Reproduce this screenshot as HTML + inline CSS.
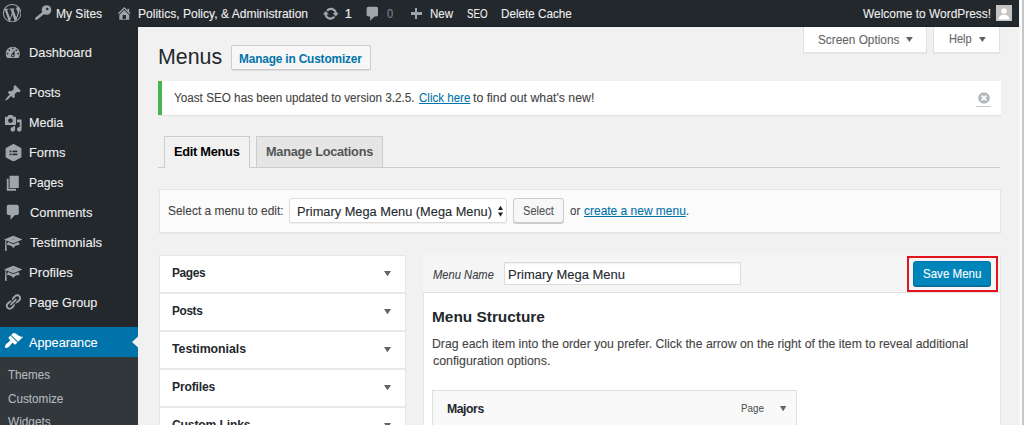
<!DOCTYPE html>
<html><head><meta charset="utf-8"><style>
html,body{margin:0;padding:0;width:1024px;height:425px;overflow:hidden;background:#f1f1f1}
.t{position:absolute;white-space:nowrap;transform-origin:0 0;font-family:"Liberation Sans",sans-serif}
.r{position:absolute}
svg{position:absolute}
</style></head><body>
<div class="r" style="left:0px;top:0px;width:1019px;height:27px;background:#23282d"></div>
<div class="r" style="left:138px;top:26px;width:881px;height:1px;background:#1d2125"></div>
<div class="t" style="left:56.09px;top:8.22px;font-size:12.50px;line-height:12.50px;color:#eee;font-weight:400;font-style:normal;transform:scaleX(0.9621);-webkit-text-stroke:0.1px #eee;">My Sites</div>
<div class="t" style="left:137.61px;top:7.65px;font-size:12.94px;line-height:12.94px;color:#eee;font-weight:400;font-style:normal;transform:scaleX(0.9324);-webkit-text-stroke:0.1px #eee;">Politics, Policy, &amp; Administration</div>
<div class="t" style="left:344.70px;top:8.07px;font-size:12.79px;line-height:12.79px;color:#eee;font-weight:400;font-style:normal;-webkit-text-stroke:0.2px #eee;">1</div>
<div class="t" style="left:387.24px;top:8.07px;font-size:12.79px;line-height:12.79px;color:#82878c;font-weight:400;font-style:normal;transform:scaleX(0.8592);-webkit-text-stroke:0.1px #82878c;">0</div>
<div class="t" style="left:429.52px;top:8.22px;font-size:12.50px;line-height:12.50px;color:#eee;font-weight:400;font-style:normal;transform:scaleX(0.9211);-webkit-text-stroke:0.1px #eee;">New</div>
<div class="t" style="left:467.04px;top:8.22px;font-size:12.50px;line-height:12.50px;color:#eee;font-weight:400;font-style:normal;transform:scaleX(0.7843);-webkit-text-stroke:0.1px #eee;">SEO</div>
<div class="t" style="left:501.11px;top:8.22px;font-size:12.50px;line-height:12.50px;color:#eee;font-weight:400;font-style:normal;transform:scaleX(0.9347);-webkit-text-stroke:0.1px #eee;">Delete Cache</div>
<div class="t" style="left:862.75px;top:8.22px;font-size:12.50px;line-height:12.50px;color:#eee;font-weight:400;font-style:normal;transform:scaleX(0.9535);-webkit-text-stroke:0.1px #eee;">Welcome to WordPress!</div>
<svg style="left:3.0px;top:4.0px;" width="18.4" height="18.4" viewBox="0 0 20 20"><path d="M20 10c0-5.51-4.49-10-10-10C4.48 0 0 4.49 0 10c0 5.52 4.48 10 10 10 5.51 0 10-4.48 10-10zM7.78 15.37L4.37 6.22c.55-.02 1.170-.08 1.17-.08.5-.06.44-1.13-.06-1.11 0 0-1.45.11-2.37.11-.18 0-.37 0-.58-.01C4.120 2.690 6.870 1.110 10 1.110c2.330 0 4.450.870 6.050 2.340-.68-.11-1.650.390-1.650 1.580 0 .740.450 1.360.900 2.100.350.610.550 1.360.550 2.460 0 1.490-1.400 5-1.400 5l-3.030-8.370c.540-.020.820-.170.820-.170.500-.050.440-1.250-.060-1.220 0 0-1.440.120-2.380.120-.870 0-2.330-.120-2.330-.120-.500-.030-.560 1.200-.060 1.220l.920.080 1.260 3.410zM17.410 10c.240-.640.740-1.870.430-4.250.700 1.290 1.050 2.710 1.050 4.250 0 3.290-1.730 6.240-4.400 7.780.970-2.590 1.940-5.200 2.920-7.780zM6.100 18.090C3.120 16.650 1.110 13.530 1.110 10c0-1.300.230-2.480.720-3.590C3.250 10.300 4.670 14.200 6.100 18.090zm4.030-6.630l2.580 6.980c-.860.290-1.760.450-2.710.450-.790 0-1.570-.110-2.290-.330.810-2.380 1.620-4.740 2.420-7.100z" fill="#a0a5aa"/></svg>
<svg style="left:34px;top:4px;" width="18" height="17" viewBox="0 0 18 17"><circle cx="12.5" cy="6" r="4.8" fill="#a0a5aa"/><circle cx="13.3" cy="5" r="1.2" fill="#23282d"/><path d="M10.5 8 L2.5 14.5" stroke="#a0a5aa" stroke-width="2.8" stroke-linecap="round"/></svg>
<svg style="left:115.5px;top:4.5px;" width="16.5" height="16.5" viewBox="0 0 20 20"><path d="M16 8.5l1.53 1.53-1.06 1.06L10 4.62l-6.47 6.47-1.06-1.06L10 2.5l4 4v-2h2v4zm-6-2.46l6 5.99V18H4v-5.97zM12 17v-5H8v5h4z" fill="#a0a5aa"/></svg>
<svg style="left:321.5px;top:4.5px;" width="17.5" height="17.5" viewBox="0 0 20 20"><path d="M10.2 3.28c3.53 0 6.43 2.61 6.92 6h2.08l-3.5 4-3.5-4h2.32c-.45-1.97-2.21-3.45-4.320-3.450-1.450 0-2.730.710-3.540 1.780L4.950 5.660C6.230 4.200 8.110 3.280 10.200 3.280zm-.4 13.44c-3.52 0-6.43-2.61-6.92-6H.8l3.5-4c1.17 1.33 2.33 2.67 3.5 4H5.48c.45 1.97 2.21 3.45 4.32 3.45 1.45 0 2.73-.71 3.54-1.78l1.71 1.95c-1.28 1.46-3.15 2.38-5.25 2.38z" fill="#a0a5aa"/></svg>
<svg style="left:363.5px;top:5.2px;" width="17.5" height="17.5" viewBox="0 0 20 20"><path d="M5 2h9c1.1 0 2 .9 2 2v7c0 1.1-.9 2-2 2h-2l-5 5v-5H5c-1.1 0-2-.9-2-2V4c0-1.1.9-2 2-2z" fill="#a0a5aa"/></svg>
<div class="r" style="left:410.5px;top:12.4px;width:11.5px;height:2.6px;background:#a0a5aa"></div>
<div class="r" style="left:414.9px;top:8px;width:2.6px;height:11.4px;background:#a0a5aa"></div>
<svg style="left:996px;top:5px;" width="16" height="16" viewBox="0 0 16 16"><rect width="16" height="16" fill="#c4c4c4"/><circle cx="8" cy="6" r="2.8" fill="#fff"/><path d="M2.5 14.5 C3 10.8 5.2 9.8 8 9.8 C10.8 9.8 13 10.8 13.5 14.5Z" fill="#fff"/></svg>
<div class="r" style="left:0px;top:27px;width:138px;height:398px;background:#23282d"></div>
<div class="t" style="left:28.96px;top:46.95px;font-size:12.94px;line-height:12.94px;color:#eee;font-weight:400;font-style:normal;transform:scaleX(0.9931);-webkit-text-stroke:0.1px #eee;">Dashboard</div>
<div class="t" style="left:28.97px;top:86.95px;font-size:12.94px;line-height:12.94px;color:#eee;font-weight:400;font-style:normal;transform:scaleX(0.9788);-webkit-text-stroke:0.1px #eee;">Posts</div>
<div class="t" style="left:28.97px;top:116.95px;font-size:12.94px;line-height:12.94px;color:#eee;font-weight:400;font-style:normal;transform:scaleX(0.9741);-webkit-text-stroke:0.1px #eee;">Media</div>
<div class="t" style="left:28.95px;top:146.95px;font-size:12.94px;line-height:12.94px;color:#eee;font-weight:400;font-style:normal;-webkit-text-stroke:0.1px #eee;">Forms</div>
<div class="t" style="left:29.01px;top:176.95px;font-size:12.94px;line-height:12.94px;color:#eee;font-weight:400;font-style:normal;transform:scaleX(0.9326);-webkit-text-stroke:0.1px #eee;">Pages</div>
<div class="t" style="left:29.95px;top:206.95px;font-size:12.94px;line-height:12.94px;color:#eee;font-weight:400;font-style:normal;transform:scaleX(0.9966);-webkit-text-stroke:0.1px #eee;">Comments</div>
<div class="t" style="left:29.95px;top:236.95px;font-size:12.94px;line-height:12.94px;color:#eee;font-weight:400;font-style:normal;transform:scaleX(1.0137);-webkit-text-stroke:0.1px #eee;">Testimonials</div>
<div class="t" style="left:28.93px;top:266.95px;font-size:12.94px;line-height:12.94px;color:#eee;font-weight:400;font-style:normal;transform:scaleX(1.0161);-webkit-text-stroke:0.1px #eee;">Profiles</div>
<div class="t" style="left:28.97px;top:296.95px;font-size:12.94px;line-height:12.94px;color:#eee;font-weight:400;font-style:normal;transform:scaleX(0.9797);-webkit-text-stroke:0.1px #eee;">Page Group</div>
<svg style="left:4.0px;top:44.0px;" width="17.6" height="17.6" viewBox="0 0 20 20"><path d="M3.76 16h12.48c1.1-1.37 1.76-3.11 1.76-5 0-4.42-3.58-8-8-8s-8 3.58-8 8c0 1.89.66 3.63 1.76 5zM10 4c.55 0 1 .45 1 1s-.45 1-1 1-1-.45-1-1 .45-1 1-1zM6 6c.55 0 1 .45 1 1s-.45 1-1 1-1-.45-1-1 .45-1 1-1zm8 0c.55 0 1 .45 1 1s-.45 1-1 1-1-.45-1-1 .45-1 1-1zm-5.37 5.55L12 7v6c0 1.1-.9 2-2 2s-2-.9-2-2c0-.57.24-1.08.63-1.45zM4 10c.55 0 1 .45 1 1s-.45 1-1 1-1-.45-1-1 .45-1 1-1zm12 0c.55 0 1 .45 1 1s-.45 1-1 1-1-.45-1-1 .45-1 1-1zm-5 3c0-.55-.45-1-1-1s-1 .45-1 1 .45 1 1 1 1-.45 1-1z" fill="#a0a5aa"/></svg>
<svg style="left:3.8px;top:83.5px;" width="18" height="18" viewBox="0 0 20 20"><path d="M10.44 3.02l1.82-1.82 6.36 6.35-1.83 1.82c-1.05-.68-2.48-.57-3.41.36l-.75.75c-.92.93-1.04 2.35-.35 3.41l-1.83 1.82-2.41-2.41-2.8 2.79c-.42.42-3.38 2.71-3.8 2.29s1.86-3.39 2.28-3.81l2.79-2.790L4.100 9.360l1.830-1.820c1.050.690 2.480.570 3.400-.360l.750-.750c.930-.920 1.050-2.350.360-3.410z" fill="#a0a5aa"/></svg>
<svg style="left:4px;top:113.5px;" width="18.5" height="18.5" viewBox="0 0 20 20"><path d="M13 11V4c0-.55-.45-1-1-1h-1.67L9 1H5L3.67 3H2c-.55 0-1 .45-1 1v7c0 .55.45 1 1 1h10c.55 0 1-.45 1-1zM7 4.5c1.38 0 2.5 1.12 2.5 2.5S8.38 9.5 7 9.5 4.5 8.38 4.5 7 5.62 4.5 7 4.5zM14 6h5v10.5c0 1.38-1.12 2.5-2.5 2.5S14 17.88 14 16.5s1.12-2.5 2.5-2.5c.17 0 .34.02.5.05V9h-3V6zm-4 8.05V13h2v3.5c0 1.38-1.12 2.5-2.5 2.5S7 17.880 7 16.500 8.120 14 9.500 14c.170 0 .340.020.500.050z" fill="#a0a5aa"/></svg>
<svg style="left:4.5px;top:143.5px;" width="17" height="17.5" viewBox="0 0 17 17.5"><path d="M8.5 0.6 L15.8 4.6 L15.8 12.9 L8.5 16.9 L1.2 12.9 L1.2 4.6Z" fill="#a0a5aa" stroke="#a0a5aa" stroke-width="1.2" stroke-linejoin="round"/><rect x="4.6" y="6.6" width="1.8" height="1.6" fill="#23282d"/><rect x="7.4" y="6.6" width="5" height="1.6" fill="#23282d"/><rect x="4.6" y="9.6" width="1.8" height="1.6" fill="#23282d"/><rect x="7.4" y="9.6" width="5" height="1.6" fill="#23282d"/></svg>
<svg style="left:3.8px;top:173.5px;" width="18.5" height="18.5" viewBox="0 0 20 20"><path d="M6 15V2h10v13H6zm-1 1h8v2H3V5h2v11z" fill="#a0a5aa"/></svg>
<svg style="left:3.8px;top:202.8px;" width="18.5" height="18.5" viewBox="0 0 20 20"><path d="M5 2h9c1.1 0 2 .9 2 2v7c0 1.1-.9 2-2 2h-2l-5 5v-5H5c-1.1 0-2-.9-2-2V4c0-1.1.9-2 2-2z" fill="#a0a5aa"/></svg>
<svg style="left:3.8px;top:233.5px;" width="18.5" height="18.5" viewBox="0 0 20 20"><path d="M10 10L2.54 7.02 3 18H1l.48-11.41L0 6l10-4 10 4zm0-5c-.55 0-1 .22-1 .5s.45.5 1 .5 1-.22 1-.5-.45-.5-1-.5zm0 6l5.57-2.23c.71.94 1.2 2.07 1.36 3.3-.3-.04-.61-.07-.93-.07-2.55 0-4.78 1.37-6 3.41C8.78 13.37 6.55 12 4 12c-.32 0-.63.03-.93.07.16-1.23.65-2.36 1.36-3.3z" fill="#a0a5aa"/></svg>
<svg style="left:3.8px;top:263.5px;" width="18.5" height="18.5" viewBox="0 0 20 20"><path d="M10 10L2.54 7.02 3 18H1l.48-11.41L0 6l10-4 10 4zm0-5c-.55 0-1 .22-1 .5s.45.5 1 .5 1-.22 1-.5-.45-.5-1-.5zm0 6l5.57-2.23c.71.94 1.2 2.07 1.36 3.3-.3-.04-.61-.07-.93-.07-2.55 0-4.78 1.37-6 3.41C8.78 13.37 6.55 12 4 12c-.32 0-.63.03-.93.07.16-1.23.65-2.36 1.36-3.3z" fill="#a0a5aa"/></svg>
<svg style="left:4.2px;top:293.2px;" width="18" height="18" viewBox="0 0 20 20"><path d="M17.74 2.76c1.68 1.69 1.68 4.41 0 6.1l-1.53 1.52c-1.12 1.12-2.7 1.47-4.14 1.09l2.62-2.61.76-.77.76-.76c.84-.84.84-2.2 0-3.04-.84-.85-2.2-.85-3.04 0l-.77.76-3.38 3.38c-.37-1.44-.02-3.02 1.1-4.14l1.52-1.53c1.69-1.68 4.42-1.68 6.1 0zM8.59 13.43l5.34-5.34c.42-.42.42-1.1 0-1.52-.44-.43-1.13-.39-1.53 0l-5.33 5.34c-.42.42-.42 1.1 0 1.52.44.43 1.13.39 1.52 0zm-.76 2.29l4.14-4.15c.38 1.44.03 3.02-1.09 4.14l-1.52 1.53c-1.69 1.68-4.41 1.68-6.1 0-1.68-1.68-1.68-4.42 0-6.1l1.53-1.52c1.12-1.12 2.7-1.470 4.140-1.100l-4.140 4.150c-.850.840-.850 2.200 0 3.050.840.840 2.200.840 3.040 0z" fill="#a0a5aa"/></svg>
<div class="r" style="left:0px;top:327px;width:138px;height:30px;background:#0073aa"></div>
<svg style="left:3.5px;top:330.5px;" width="19.5" height="19.5" viewBox="0 0 20 20"><path d="M14.48 11.06L7.41 3.99l1.5-1.5c.5-.56 2.3-.47 3.51.32 1.21.8 1.43 1.28 2.91 2.1 1.18.64 2.45 1.26 4.45.85zm-.71.71L6.7 4.7 4.93 6.47c-.39.39-.39 1.02 0 1.41l1.06 1.06c.39.39.39 1.03 0 1.42-.6.6-1.43 1.11-2.21 1.69-.35.26-.7.53-1.01.84C1.43 14.230.4 16.080 1.4 17.070c.99 1 2.84-.03 4.18-1.36.31-.31.58-.66.85-1.02.57-.78 1.08-1.61 1.69-2.21.39-.39 1.02-.39 1.41 0l1.06 1.06c.39.39 1.02.39 1.41 0z" fill="#fff"/></svg>
<svg style="left:131.5px;top:336px;" width="6.5" height="12" viewBox="0 0 6.5 12"><path d="M6.5 0 L0 6 L6.5 12Z" fill="#f1f1f1"/></svg>
<div class="t" style="left:29.45px;top:336.33px;font-size:13.08px;line-height:13.08px;color:#fff;font-weight:400;font-style:normal;transform:scaleX(0.9722);-webkit-text-stroke:0.1px #fff;">Appearance</div>
<div class="r" style="left:0px;top:357px;width:138px;height:68px;background:#32373c"></div>
<div class="t" style="left:8.15px;top:368.72px;font-size:12.50px;line-height:12.50px;color:#b4b9be;font-weight:400;font-style:normal;transform:scaleX(0.9310);-webkit-text-stroke:0.1px #b4b9be;">Themes</div>
<div class="t" style="left:8.15px;top:392.62px;font-size:12.50px;line-height:12.50px;color:#b4b9be;font-weight:400;font-style:normal;transform:scaleX(0.9376);-webkit-text-stroke:0.1px #b4b9be;">Customize</div>
<div class="t" style="left:8.15px;top:416.32px;font-size:12.50px;line-height:12.50px;color:#b4b9be;font-weight:400;font-style:normal;transform:scaleX(0.9444);-webkit-text-stroke:0.1px #b4b9be;">Widgets</div>
<div class="r" style="left:138px;top:27px;width:881px;height:398px;background:#f1f1f1"></div>
<div class="r" style="left:1019px;top:0px;width:1px;height:425px;background:#f4f4f4"></div>
<div class="r" style="left:1020px;top:0px;width:2px;height:425px;background:#fbfbfb"></div>
<div class="r" style="left:1022px;top:0px;width:2px;height:425px;background:#c6c6c6"></div>
<div class="r" style="left:803px;top:27px;width:124px;height:26px;background:#fff;border:1px solid #e1e1e1;border-top:none;box-sizing:border-box;box-shadow:0 1px 1px rgba(0,0,0,.04)"></div>
<div class="t" style="left:817.95px;top:34.34px;font-size:12.35px;line-height:12.35px;color:#666;font-weight:400;font-style:normal;transform:scaleX(0.9564);-webkit-text-stroke:0.1px #666;">Screen Options</div>
<div class="r" style="left:933px;top:27px;width:67px;height:26px;background:#fff;border:1px solid #e1e1e1;border-top:none;box-sizing:border-box;box-shadow:0 1px 1px rgba(0,0,0,.04)"></div>
<div class="t" style="left:948.85px;top:34.31px;font-size:11.92px;line-height:11.92px;color:#666;font-weight:400;font-style:normal;transform:scaleX(0.9253);-webkit-text-stroke:0.1px #666;">Help</div>
<svg style="left:906.2px;top:37.0px;" width="6.8" height="5.0" viewBox="0 0 6.8 5.0"><path d="M0 0 L6.8 0 L3.4 5.0Z" fill="#5f6468"/></svg>
<svg style="left:979.1px;top:37.0px;" width="6.8" height="5.0" viewBox="0 0 6.8 5.0"><path d="M0 0 L6.8 0 L3.4 5.0Z" fill="#5f6468"/></svg>
<div class="t" style="left:157.91px;top:47.19px;font-size:21.51px;line-height:21.51px;color:#23282d;font-weight:400;font-style:normal;transform:scaleX(0.9939);">Menus</div>
<div class="r" style="left:231px;top:45px;width:139.5px;height:24.5px;background:#f7f7f7;border:1px solid #ccc;border-radius:2px;box-sizing:border-box;box-shadow:0 1px 0 #ddd"></div>
<div class="t" style="left:239.40px;top:52.51px;font-size:12.15px;line-height:12.15px;color:#0073aa;font-weight:700;font-style:normal;transform:scaleX(0.9764);letter-spacing:-0.160px;">Manage in Customizer</div>
<div class="r" style="left:158px;top:80.5px;width:843px;height:34px;background:#fff;border-left:4px solid #46b450;box-sizing:border-box;box-shadow:0 1px 1px rgba(0,0,0,.06)"></div>
<div class="t" style="left:174.24px;top:91.43px;font-size:13.08px;line-height:13.08px;color:#444;font-weight:400;font-style:normal;transform:scaleX(0.8955);-webkit-text-stroke:0.1px #444;">Yoast SEO has been updated to version 3.2.5.</div>
<div class="t" style="left:418.54px;top:91.43px;font-size:13.08px;line-height:13.08px;color:#0073aa;font-weight:400;font-style:normal;transform:scaleX(0.8832);-webkit-text-stroke:0.1px #0073aa;text-decoration:underline;">Click here</div>
<div class="t" style="left:473.25px;top:91.43px;font-size:13.08px;line-height:13.08px;color:#444;font-weight:400;font-style:normal;transform:scaleX(0.9404);-webkit-text-stroke:0.1px #444;">to find out what&#39;s new!</div>
<svg style="left:977.6px;top:92px;" width="12" height="12" viewBox="0 0 12 12"><circle cx="6" cy="6" r="5.8" fill="#b4b9be"/><path d="M3.6 3.6 L8.4 8.4 M8.4 3.6 L3.6 8.4" stroke="#fff" stroke-width="1.6"/></svg>
<div class="r" style="left:976px;top:105.8px;width:15px;height:1px;background:#c8cdc4"></div>
<div class="r" style="left:158px;top:167px;width:842px;height:1px;background:#ccc"></div>
<div class="r" style="left:164px;top:136px;width:86px;height:32px;background:#f1f1f1;border:1px solid #ccc;border-bottom:none;box-sizing:border-box"></div>
<div class="t" style="left:174.40px;top:145.18px;font-size:13.26px;line-height:13.26px;color:#000;font-weight:700;font-style:normal;transform:scaleX(0.9645);letter-spacing:-0.277px;">Edit Menus</div>
<div class="r" style="left:256px;top:136px;width:127px;height:31px;background:#e5e5e5;border:1px solid #ccc;border-bottom:none;box-sizing:border-box"></div>
<div class="t" style="left:266.30px;top:145.18px;font-size:13.26px;line-height:13.26px;color:#555;font-weight:700;font-style:normal;transform:scaleX(0.9632);letter-spacing:-0.282px;">Manage Locations</div>
<div class="r" style="left:158.5px;top:188.5px;width:842px;height:44px;background:#fbfbfb;border:1px solid #e5e5e5;box-sizing:border-box;box-shadow:0 1px 1px rgba(0,0,0,.04)"></div>
<div class="t" style="left:167.65px;top:205.05px;font-size:12.94px;line-height:12.94px;color:#444;font-weight:400;font-style:normal;transform:scaleX(0.9237);-webkit-text-stroke:0.1px #444;">Select a menu to edit:</div>
<div class="r" style="left:289px;top:198px;width:218px;height:25px;background:#fff;border:1px solid #ddd;border-radius:3px;box-sizing:border-box;box-shadow:0 1px 1px rgba(0,0,0,.05)"></div>
<div class="t" style="left:297.38px;top:204.80px;font-size:13.23px;line-height:13.23px;color:#23282d;font-weight:400;font-style:normal;transform:scaleX(0.9686);-webkit-text-stroke:0.1px #23282d;">Primary Mega Menu (Mega Menu)</div>
<svg style="left:497.5px;top:205px;" width="5" height="13" viewBox="0 0 5 13"><path d="M0 5 L5 5 L2.5 0.8Z M0 7.6 L5 7.6 L2.5 11.8Z" fill="#222"/></svg>
<div class="r" style="left:513px;top:198px;width:51px;height:25px;background:#f7f7f7;border:1px solid #ccc;border-radius:3px;box-sizing:border-box;box-shadow:0 1px 0 #ccc"></div>
<div class="t" style="left:522.84px;top:205.05px;font-size:12.94px;line-height:12.94px;color:#555;font-weight:400;font-style:normal;transform:scaleX(0.8566);-webkit-text-stroke:0.1px #555;">Select</div>
<div class="t" style="left:569.74px;top:205.05px;font-size:12.94px;line-height:12.94px;color:#444;font-weight:400;font-style:normal;transform:scaleX(0.8871);-webkit-text-stroke:0.1px #444;">or</div>
<div class="t" style="left:584.45px;top:205.05px;font-size:12.94px;line-height:12.94px;color:#0073aa;font-weight:400;font-style:normal;transform:scaleX(0.9252);-webkit-text-stroke:0.1px #0073aa;text-decoration:underline;">create a new menu</div>
<div class="t" style="left:685.99px;top:205.05px;font-size:12.94px;line-height:12.94px;color:#444;font-weight:400;font-style:normal;transform:scaleX(0.8571);-webkit-text-stroke:0.1px #444;">.</div>
<div class="r" style="left:158.5px;top:254.5px;width:247px;height:171px;background:#fff;border:1px solid #e5e5e5;box-sizing:border-box;box-shadow:0 1px 1px rgba(0,0,0,.04)"></div>
<div class="t" style="left:172.10px;top:267.08px;font-size:12.43px;line-height:12.43px;color:#23282d;font-weight:700;font-style:normal;transform:scaleX(0.9589);letter-spacing:-0.377px;">Pages</div>
<svg style="left:384.3px;top:271.0px;" width="7.0" height="5.3" viewBox="0 0 7.0 5.3"><path d="M0 0 L7.0 0 L3.5 5.3Z" fill="#5f6468"/></svg>
<div class="r" style="left:159px;top:292.0px;width:246px;height:1.5px;background:#e8e8e8"></div>
<div class="t" style="left:172.10px;top:305.08px;font-size:12.43px;line-height:12.43px;color:#23282d;font-weight:700;font-style:normal;transform:scaleX(0.9534);letter-spacing:-0.395px;">Posts</div>
<svg style="left:384.3px;top:309.0px;" width="7.0" height="5.3" viewBox="0 0 7.0 5.3"><path d="M0 0 L7.0 0 L3.5 5.3Z" fill="#5f6468"/></svg>
<div class="r" style="left:159px;top:330.0px;width:246px;height:1.5px;background:#e8e8e8"></div>
<div class="t" style="left:172.10px;top:343.08px;font-size:12.43px;line-height:12.43px;color:#23282d;font-weight:700;font-style:normal;transform:scaleX(0.9932);letter-spacing:-0.046px;">Testimonials</div>
<svg style="left:384.3px;top:347.0px;" width="7.0" height="5.3" viewBox="0 0 7.0 5.3"><path d="M0 0 L7.0 0 L3.5 5.3Z" fill="#5f6468"/></svg>
<div class="r" style="left:159px;top:368.0px;width:246px;height:1.5px;background:#e8e8e8"></div>
<div class="t" style="left:172.10px;top:381.08px;font-size:12.43px;line-height:12.43px;color:#23282d;font-weight:700;font-style:normal;transform:scaleX(0.9755);letter-spacing:-0.160px;">Profiles</div>
<svg style="left:384.3px;top:385.0px;" width="7.0" height="5.3" viewBox="0 0 7.0 5.3"><path d="M0 0 L7.0 0 L3.5 5.3Z" fill="#5f6468"/></svg>
<div class="r" style="left:159px;top:406.0px;width:246px;height:1.5px;background:#e8e8e8"></div>
<div class="t" style="left:172.10px;top:419.08px;font-size:12.43px;line-height:12.43px;color:#23282d;font-weight:700;font-style:normal;transform:scaleX(0.9777);letter-spacing:-0.167px;">Custom Links</div>
<svg style="left:384.3px;top:423.0px;" width="7.0" height="5.3" viewBox="0 0 7.0 5.3"><path d="M0 0 L7.0 0 L3.5 5.3Z" fill="#5f6468"/></svg>
<div class="r" style="left:422.5px;top:254.5px;width:578px;height:171px;background:#fff;border:1px solid #e5e5e5;box-sizing:border-box;box-shadow:0 1px 1px rgba(0,0,0,.04)"></div>
<div class="r" style="left:423px;top:255px;width:577px;height:38px;background:#f5f5f5;border-bottom:1px solid #dfdfdf;box-sizing:border-box"></div>
<div class="t" style="left:432.55px;top:269.04px;font-size:12.35px;line-height:12.35px;color:#3c4146;font-weight:400;font-style:italic;transform:scaleX(0.9056);-webkit-text-stroke:0.1px #3c4146;">Menu Name</div>
<div class="r" style="left:503.8px;top:262.2px;width:237.4px;height:23.3px;background:#fff;border:1px solid #ddd;box-sizing:border-box;box-shadow:inset 0 1px 2px rgba(0,0,0,.07)"></div>
<div class="t" style="left:508.47px;top:268.20px;font-size:13.23px;line-height:13.23px;color:#23282d;font-weight:400;font-style:normal;transform:scaleX(0.9834);-webkit-text-stroke:0.1px #23282d;">Primary Mega Menu</div>
<div class="r" style="left:907px;top:256px;width:91px;height:36px;border:2px solid #e3131b;box-sizing:border-box"></div>
<div class="r" style="left:913px;top:261px;width:78px;height:25px;background:#0085ba;border:1px solid #0073aa;border-radius:3px;box-sizing:border-box;box-shadow:0 1px 0 #006799"></div>
<div class="t" style="left:923.05px;top:267.77px;font-size:12.79px;line-height:12.79px;color:#fff;font-weight:400;font-style:normal;transform:scaleX(0.9034);-webkit-text-stroke:0.1px #fff;">Save Menu</div>
<div class="t" style="left:431.58px;top:309.20px;font-size:15.12px;line-height:15.12px;color:#23282d;font-weight:700;font-style:normal;transform:scaleX(1.0191);">Menu Structure</div>
<div class="t" style="left:431.59px;top:338.47px;font-size:12.79px;line-height:12.79px;color:#444;font-weight:400;font-style:normal;transform:scaleX(0.9590);-webkit-text-stroke:0.1px #444;">Drag each item into the order you prefer. Click the arrow on the right of the item to reveal additional</div>
<div class="t" style="left:432.55px;top:354.67px;font-size:12.79px;line-height:12.79px;color:#444;font-weight:400;font-style:normal;transform:scaleX(0.9657);-webkit-text-stroke:0.1px #444;">configuration options.</div>
<div class="r" style="left:432px;top:390px;width:365px;height:35px;background:#f9f9f9;border:1px solid #dfdfdf;border-bottom:none;box-sizing:border-box"></div>
<div class="t" style="left:447.00px;top:401.91px;font-size:12.98px;line-height:12.98px;color:#23282d;font-weight:700;font-style:normal;transform:scaleX(0.9432);letter-spacing:-0.472px;">Majors</div>
<div class="t" style="left:741.34px;top:401.76px;font-size:11.63px;line-height:11.63px;color:#555;font-weight:400;font-style:normal;transform:scaleX(0.8447);-webkit-text-stroke:0.1px #555;">Page</div>
<svg style="left:779.7px;top:405.6px;" width="6.3" height="5.3" viewBox="0 0 6.3 5.3"><path d="M0 0 L6.3 0 L3.15 5.3Z" fill="#5f6468"/></svg>
</body></html>
